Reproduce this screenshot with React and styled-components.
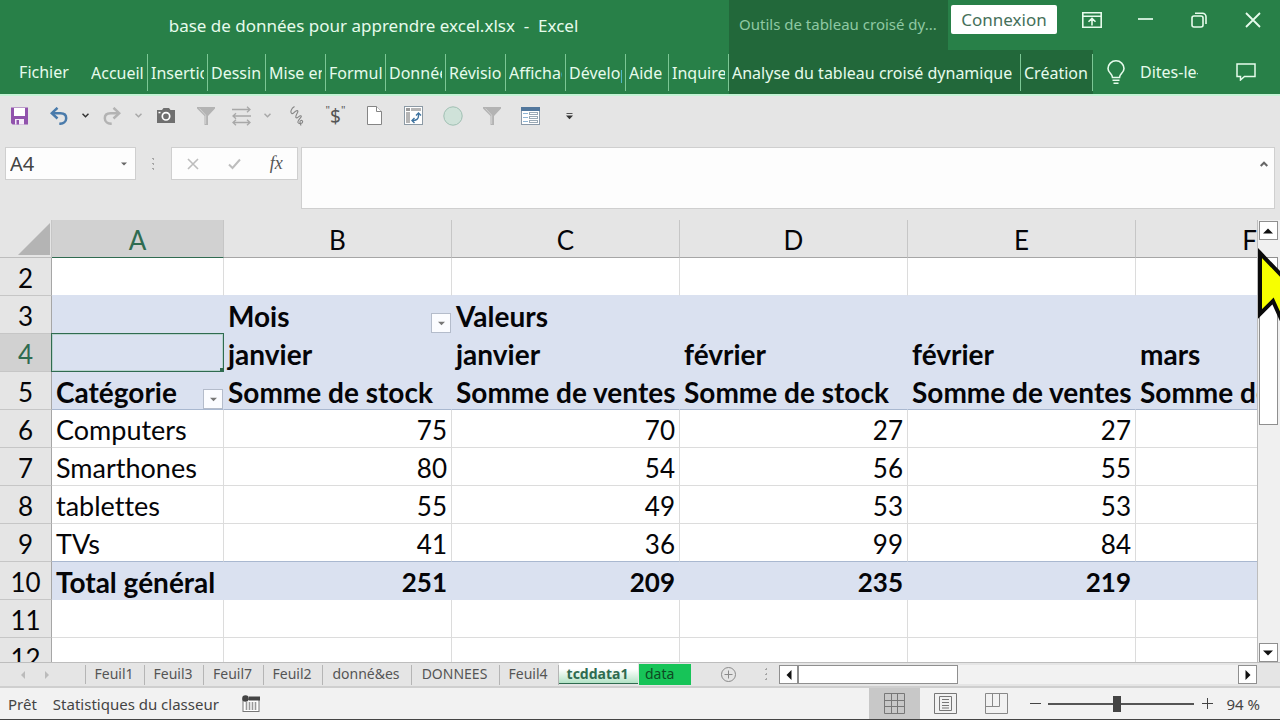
import React, { useState } from 'react'
import styled, { createGlobalStyle, css } from 'styled-components'

const colors = {
  green: '#288048',
  darkGreen: '#22683a',
  mint: '#c4f3d5',
  chrome: '#e5e5e5',
  pivot: '#dae1f0',
  pivotEdge: '#a9b8d0',
  line: '#dcdcdc',
  accent: '#2f6b50'
}

const ribbonTabs = [
  { label: 'Accueil', width: 60 },
  { label: 'Insertion', width: 60 },
  { label: 'Dessin', width: 58 },
  { label: 'Mise en page', width: 60 },
  { label: 'Formules', width: 60 },
  { label: 'Données', width: 60 },
  { label: 'Révision', width: 60 },
  { label: 'Affichage', width: 60 },
  { label: 'Développeur', width: 60 },
  { label: 'Aide', width: 43 },
  { label: 'Inquire', width: 60 }
]

const columns = ['A', 'B', 'C', 'D', 'E', 'F']

const rows = [
  { n: 2, edge: colors.pivot, cells: ['', '', '', '', '', ''] },
  { n: 3, pivot: true, cells: ['', 'Mois', 'Valeurs', '', '', ''], filter: 1 },
  { n: 4, pivot: true, cells: ['', 'janvier', 'janvier', 'février', 'février', 'mars'] },
  {
    n: 5,
    pivot: true,
    edge: colors.pivotEdge,
    filter: 0,
    cells: ['Catégorie', 'Somme de stock', 'Somme de ventes', 'Somme de stock', 'Somme de ventes', 'Somme de stock']
  },
  { n: 6, cells: ['Computers', 75, 70, 27, 27, ''] },
  { n: 7, cells: ['Smarthones', 80, 54, 56, 55, ''] },
  { n: 8, cells: ['tablettes', 55, 49, 53, 53, ''] },
  { n: 9, edge: colors.pivotEdge, cells: ['TVs', 41, 36, 99, 84, ''] },
  { n: 10, pivot: true, cells: ['Total général', 251, 209, 235, 219, ''] },
  { n: 11, cells: ['', '', '', '', '', ''] },
  { n: 12, cells: ['', '', '', '', '', ''] }
]

const sheets = [
  { name: 'Feuil1', width: 59 },
  { name: 'Feuil3', width: 59 },
  { name: 'Feuil7', width: 60 },
  { name: 'Feuil2', width: 59 },
  { name: 'donné&es', width: 89 },
  { name: 'DONNEES', width: 88 },
  { name: 'Feuil4', width: 59 }
]

function Chevron({ color = '#333' }) {
  return (
    <svg width="7" height="5" viewBox="0 0 7 5" fill="none" stroke={color} strokeWidth="1.5">
      <path d="M0.5 0.8L3.5 3.8L6.5 0.8" />
    </svg>
  )
}

function Triangle({ dir = 'down', size = 8, color = '#111' }) {
  const points = {
    down: '0,2 8,2 4,6',
    up: '0,6 8,6 4,2',
    left: '6,0 6,8 2,4',
    right: '2,0 2,8 6,4'
  }
  return (
    <svg width={size} height={size} viewBox="0 0 8 8" fill={color}>
      <polygon points={points[dir]} />
    </svg>
  )
}

function Funnel() {
  return (
    <svg width="18" height="18" viewBox="0 0 18 18" fill="#b3b3b3">
      <path d="M0 0H18V1.5L11 9V18H7.5V9L0 1.5Z" />
      <path d="M2.5 1.5L8.7 8.2V17" stroke="#d0d0d0" fill="none" />
    </svg>
  )
}

const SaveIcon = () => (
  <svg width="17" height="18" viewBox="0 0 17 18">
    <path d="M0 0.5H17V17.5H1.5L0 16Z" fill="#9153ad" />
    <rect x="3" y="1" width="11" height="8" fill="#fff" />
    <rect x="4" y="12" width="9" height="5.5" fill="#f4ecf8" />
    <rect x="5.5" y="13" width="2.5" height="4.5" fill="#9153ad" />
  </svg>
)

const UndoIcon = ({ color, flip }) => (
  <svg width="18" height="18" viewBox="0 0 18 18" fill="none" stroke={color} strokeWidth="2.5">
    <g transform={flip ? 'matrix(-1 0 0 1 18 0)' : undefined}>
      <path d="M7.5 0.8L1.8 6.2L7.5 11.5" />
      <path d="M2 6.2H10.5C14.3 6.2 16.2 8.4 16.2 11.2C16.2 14.6 13.4 16.8 9.3 16.8" />
    </g>
  </svg>
)

const CameraIcon = () => (
  <svg width="20" height="17" viewBox="0 0 20 17">
    <path d="M1 3H6L7.5 1H13L14.5 3H19V16H1Z" fill="#6f6f6f" />
    <circle cx="10" cy="9.3" r="3.7" fill="#6f6f6f" stroke="#fff" strokeWidth="1.7" />
    <rect x="2.5" y="4.8" width="2" height="1.5" fill="#fff" />
  </svg>
)

const ArrowsIcon = () => (
  <svg width="19" height="20" viewBox="0 0 19 20" fill="none" stroke="#a8a8a8" strokeWidth="1.3">
    <path d="M0 3.5H18M15 0.8L18 3.5L15 6.2" />
    <path d="M19 10H1M4 7.3L1 10L4 12.7" />
    <path d="M1 16.5H18M4 13.8L1 16.5L4 19.2M15 13.8L18 16.5L15 19.2" />
  </svg>
)

const SquiggleIcon = () => (
  <svg width="14" height="20" viewBox="0 0 14 20" fill="none" stroke="#858585" strokeWidth="1.1">
    <path d="M4.5 0.5C1 2.5 0 6.5 1.8 7.5C3.8 8.5 5 4.2 7.3 4.6C9.5 5.4 4.6 9.8 6 11.6C7.4 13 9.4 8.8 11 9.8C12.6 11.2 6.8 14 8 16.5C9.2 18.4 13 17.6 12.6 15.4C12 13.6 9.6 14.4 10 16.5L11 19.5" />
  </svg>
)

const PageIcon = () => (
  <svg width="15" height="19" viewBox="0 0 15 19" fill="#fff" stroke="#858585">
    <path d="M0.5 0.5H9.5L14.5 5.5V18.5H0.5Z" />
    <path d="M9.5 0.5V5.5H14.5" />
  </svg>
)

const PivotIcon = () => (
  <svg width="19" height="19" viewBox="0 0 19 19">
    <rect x="0.5" y="0.5" width="18" height="18" fill="#fff" stroke="#8c9aa5" />
    <rect x="2" y="2" width="4" height="3" fill="#9b9b9b" />
    <rect x="7" y="2" width="10" height="3" fill="#b5b5b5" />
    <rect x="2" y="6" width="4" height="11" fill="#b5b5b5" />
    <g fill="none" stroke="#3d729f" strokeWidth="1.4">
      <path d="M14.5 7.5V10C14.5 13 12.5 14.5 8.5 14.5" />
      <path d="M12 9.5L14.5 7L17 9.5M10.5 12L8 14.5L10.5 17" />
    </g>
  </svg>
)

const FormIcon = () => (
  <svg width="19" height="18" viewBox="0 0 19 18">
    <rect x="0.5" y="0.5" width="18" height="17" fill="#fff" stroke="#8a99a8" />
    <rect width="19" height="4" fill="#52779c" />
    <path d="M2 6.5H7M2 10.5H7M2 14.5H7" stroke="#90b5d5" />
    <g fill="none" stroke="#9aa9b5">
      <rect x="8.5" y="5.5" width="8" height="2" />
      <rect x="8.5" y="9.5" width="8" height="2" />
      <rect x="8.5" y="13.5" width="8" height="2" />
    </g>
  </svg>
)

function TitleBar() {
  return (
    <TitleRow>
      <Title>base de données pour apprendre excel.xlsx&nbsp; -&nbsp; Excel</Title>
      <ContextTitle>Outils de tableau croisé dy...</ContextTitle>
      <SignIn>Connexion</SignIn>
      <WindowButtons>
        <WindowButton aria-label="Options du ruban">
          <svg width="20" height="16" viewBox="0 0 20 16" fill="none" stroke="currentColor" strokeWidth="1.6">
            <path d="M0.8 0.8H19.2V15.2H0.8ZM1 4.3H19M10 13.5V6.5M6.5 9.8L10 6.4L13.5 9.8" />
          </svg>
        </WindowButton>
        <WindowButton aria-label="Réduire">
          <svg width="15" height="16" viewBox="0 0 15 16" stroke="currentColor" strokeWidth="1.7">
            <path d="M0 7H15" />
          </svg>
        </WindowButton>
        <WindowButton aria-label="Restaurer">
          <svg width="16" height="16" viewBox="0 0 16 16" fill="none" stroke="currentColor" strokeWidth="1.6">
            <rect x="1" y="4" width="11" height="11" rx="2" />
            <path d="M4 1.2H11.5A3.5 3.5 0 0 1 15 4.7V12" />
          </svg>
        </WindowButton>
        <WindowButton aria-label="Fermer">
          <svg width="16" height="16" viewBox="0 0 16 16" stroke="currentColor" strokeWidth="1.8">
            <path d="M1 1L15 15M15 1L1 15" />
          </svg>
        </WindowButton>
      </WindowButtons>
    </TitleRow>
  )
}

function Ribbon() {
  return (
    <RibbonRow>
      <FileTab>Fichier</FileTab>
      {ribbonTabs.map(tab => (
        <RibbonTab key={tab.label} $width={tab.width}>
          <span>{tab.label}</span>
        </RibbonTab>
      ))}
      <ContextTabs>
        <RibbonTab $width={292}><span>Analyse du tableau croisé dynamique</span></RibbonTab>
        <RibbonTab $width={72}><span>Création</span></RibbonTab>
      </ContextTabs>
      <TellMe>
        <svg width="18" height="24" viewBox="0 0 18 24" fill="none" stroke="currentColor" strokeWidth="1.6">
          <path d="M5.5 17.5C5.5 13.5 1 13 1 8.5A8 7.7 0 0 1 17 8.5C17 13 12.5 13.5 12.5 17.5ZM5.5 20.3H12.5M6.5 23.2H11.5" />
        </svg>
        <span>Dites-le-nous</span>
      </TellMe>
      <CommentButton aria-label="Commentaires">
        <svg width="20" height="18" viewBox="0 0 20 18" fill="none" stroke="currentColor" strokeWidth="1.5">
          <path d="M1 1H19V13.5H8.5L4.5 17V13.5H1Z" />
        </svg>
      </CommentButton>
    </RibbonRow>
  )
}

function QuickAccess() {
  return (
    <QuickBar>
      <Tool aria-label="Enregistrer"><SaveIcon /></Tool>
      <Tool aria-label="Annuler"><UndoIcon color="#4a7bab" /></Tool>
      <Tool $width={14} aria-label="Liste annuler"><Chevron /></Tool>
      <Tool aria-label="Rétablir"><UndoIcon color="#b3b3b3" flip /></Tool>
      <Tool $width={14} aria-label="Liste rétablir"><Chevron color="#a8a8a8" /></Tool>
      <Tool $width={41} aria-label="Appareil photo"><CameraIcon /></Tool>
      <Tool aria-label="Filtrer"><Funnel /></Tool>
      <Tool $width={32} aria-label="Flèches"><ArrowsIcon /></Tool>
      <Tool $width={20} aria-label="Liste flèches"><Chevron color="#a8a8a8" /></Tool>
      <Tool aria-label="Dessin libre"><SquiggleIcon /></Tool>
      <Tool aria-label="Format monétaire"><sup>"</sup>$<sup>"</sup></Tool>
      <Tool aria-label="Nouveau"><PageIcon /></Tool>
      <Tool aria-label="Tableau croisé dynamique"><PivotIcon /></Tool>
      <Tool aria-label="Ellipse">
        <svg width="20" height="20" viewBox="0 0 20 20">
          <circle cx="10" cy="10" r="9.2" fill="#cfe2d9" stroke="#9fbfb2" />
        </svg>
      </Tool>
      <Tool aria-label="Filtre automatique"><Funnel /></Tool>
      <Tool aria-label="Formulaire"><FormIcon /></Tool>
      <Tool aria-label="Personnaliser">
        <svg width="7" height="8" viewBox="0 0 7 8">
          <path d="M0.5 1.5H6.5" stroke="#555" />
          <polygon points="0,3.5 7,3.5 3.5,7.2" fill="#333" />
        </svg>
      </Tool>
    </QuickBar>
  )
}

function FormulaBar() {
  return (
    <FormulaRow>
      <NameBox>
        <input aria-label="Zone Nom" defaultValue="A4" />
        <button aria-label="Liste des noms"><Triangle size={6} color="#666" /></button>
      </NameBox>
      <Dots $width={35} />
      <FormulaButtons>
        <button aria-label="Annuler la saisie">
          <svg width="12" height="12" viewBox="0 0 12 12" stroke="#bdbdbd" strokeWidth="1.6">
            <path d="M1 1L11 11M11 1L1 11" />
          </svg>
        </button>
        <button aria-label="Valider">
          <svg width="13" height="12" viewBox="0 0 13 12" fill="none" stroke="#bdbdbd" strokeWidth="2">
            <path d="M1 6.5L4.5 10L12 1.5" />
          </svg>
        </button>
        <button>fx</button>
      </FormulaButtons>
      <FormulaField>
        <textarea aria-label="Barre de formule" />
        <button aria-label="Réduire la barre">
          <svg width="8" height="6" viewBox="0 0 8 6" fill="none" stroke="#666" strokeWidth="2">
            <path d="M0.7 5L4 1.7L7.3 5" />
          </svg>
        </button>
      </FormulaField>
    </FormulaRow>
  )
}

function Grid() {
  // active cell is [row number, column index]
  const [active, setActive] = useState([4, 0])

  return (
    <GridPane>
      <Table>
        <colgroup>
          <col style={{ width: 52 }} />
          {columns.map((c, i) => <col key={c} style={{ width: i === 0 ? 172 : 228 }} />)}
        </colgroup>
        <thead>
          <tr>
            <Corner aria-label="Tout sélectionner">
              <svg width="32" height="32" viewBox="0 0 32 32"><polygon points="32,0 32,32 0,32" fill="#b4b4b4" /></svg>
            </Corner>
            {columns.map((c, i) => <ColHead key={c} $active={active[1] === i}>{c}</ColHead>)}
          </tr>
        </thead>
        <tbody>
          {rows.map(row => (
            <tr key={row.n}>
              <RowHead $active={active[0] === row.n}>{row.n}</RowHead>
              {row.cells.map((value, i) => (
                <Cell
                  key={i}
                  $pivot={row.pivot}
                  $edge={row.edge}
                  $number={typeof value === 'number'}
                  onClick={() => setActive([row.n, i])}
                >
                  {value}
                  {row.filter === i && (
                    <FilterButton aria-label="Filtre"><Triangle size={7} color="#777" /></FilterButton>
                  )}
                  {active[0] === row.n && active[1] === i && <Selection />}
                </Cell>
              ))}
            </tr>
          ))}
        </tbody>
      </Table>
    </GridPane>
  )
}

function SheetBar() {
  return (
    <SheetRow>
      <SheetNav>
        <button aria-label="Feuille précédente"><Triangle dir="left" color="#bbb" /></button>
        <button aria-label="Feuille suivante"><Triangle dir="right" color="#bbb" /></button>
      </SheetNav>
      {sheets.map(sheet => <SheetTab key={sheet.name} $width={sheet.width}>{sheet.name}</SheetTab>)}
      <ActiveSheet>tcddata1</ActiveSheet>
      <DataSheet>data</DataSheet>
      <AddSheet aria-label="Nouvelle feuille">
        <svg width="15" height="15" viewBox="0 0 15 15" fill="none" stroke="#8a8a8a">
          <circle cx="7.5" cy="7.5" r="7" />
          <path d="M7.5 3.5V11.5M3.5 7.5H11.5" />
        </svg>
      </AddSheet>
      <Dots $width={25} />
      <HScroll>
        <ScrollButton aria-label="Défiler à gauche"><Triangle dir="left" size={10} /></ScrollButton>
        <HThumb />
        <ScrollButton aria-label="Défiler à droite"><Triangle dir="right" size={10} /></ScrollButton>
      </HScroll>
    </SheetRow>
  )
}

function StatusBar() {
  const [zoom, setZoom] = useState(94)

  return (
    <StatusRow>
      <span>Prêt</span>
      <span>Statistiques du classeur</span>
      <MacroButton aria-label="Enregistrer une macro">
        <svg width="18" height="18" viewBox="0 0 18 18">
          <rect x="1" y="4.5" width="16" height="12" fill="#fff" stroke="#777" />
          <rect x="7" y="1.5" width="11" height="4" fill="#444" />
          <path d="M4.5 7V15M7.5 7V15M10.5 7V15M13.5 7V15" stroke="#999" strokeWidth="1.6" />
          <circle cx="3.5" cy="3.5" r="3.3" fill="#444" />
        </svg>
      </MacroButton>
      <Spacer />
      <ViewButton $active aria-label="Normal">
        <svg width="21" height="21" viewBox="0 0 21 21" fill="none" stroke="#777">
          <path d="M0.5 0.5H20.5V20.5H0.5ZM7.5 0V21M13.5 0V21M0 7.5H21M0 13.5H21" />
        </svg>
      </ViewButton>
      <ViewButton aria-label="Mise en page">
        <svg width="23" height="21" viewBox="0 0 23 21" fill="none" stroke="#777">
          <path d="M0.5 0.5H22.5V20.5H0.5ZM5.5 3.5H17.5V17.5H5.5ZM8 6.5H15M8 9.5H15M8 12.5H15M8 15H15" />
        </svg>
      </ViewButton>
      <ViewButton aria-label="Avec sauts de page">
        <svg width="23" height="21" viewBox="0 0 23 21" fill="none" stroke="#888">
          <path d="M0.5 0.5H22.5V20.5H0.5ZM0.5 13.5H14.5V0.5M7.5 0.5V13.5" />
        </svg>
      </ViewButton>
      <ZoomButton aria-label="Zoom arrière" onClick={() => setZoom(zoom - 10)}>
        <svg width="11" height="11" viewBox="0 0 11 11" stroke="#444"><path d="M0 5.5H11" /></svg>
      </ZoomButton>
      <ZoomSlider aria-label="Zoom" min="0" max="200" value={zoom} onChange={e => setZoom(Number(e.target.value))} />
      <ZoomButton aria-label="Zoom avant" onClick={() => setZoom(zoom + 10)}>
        <svg width="11" height="11" viewBox="0 0 11 11" stroke="#444"><path d="M0 5.5H11M5.5 0V11" /></svg>
      </ZoomButton>
      <ZoomValue>{zoom} %</ZoomValue>
    </StatusRow>
  )
}

function App() {
  return (
    <Window>
      <GlobalStyle />
      <Header>
        <TitleBar />
        <Ribbon />
      </Header>
      <QuickAccess />
      <FormulaBar />
      <Workspace>
        <Grid />
        <VScroll>
          <ScrollButton aria-label="Défiler vers le haut"><Triangle dir="up" size={10} /></ScrollButton>
          <VThumb />
          <ScrollButton aria-label="Défiler vers le bas"><Triangle size={10} /></ScrollButton>
          <Pointer width="50" height="100" viewBox="0 0 50 100">
            <path d="M2 6L46 52L26 54L38 84L30 87L15 54L2 67Z" fill="#f7ff00" stroke="#0a0a0a" strokeWidth="4" />
          </Pointer>
        </VScroll>
      </Workspace>
      <SheetBar />
      <StatusBar />
    </Window>
  )
}

const GlobalStyle = createGlobalStyle`
  * { box-sizing: border-box; }
  body {
    margin: 0;
    font-family: 'Noto Sans', 'Open Sans', sans-serif;
  }
  button {
    display: flex;
    align-items: center;
    justify-content: center;
    padding: 0;
    border: 0;
    background: none;
    color: inherit;
    font: inherit;
  }
  svg { display: block; flex: none; }
`

const Window = styled.div`
  display: flex;
  flex-direction: column;
  height: 100vh;
  overflow: hidden;
  background: ${colors.chrome};
  border-bottom: 1px solid #444;
`

const Header = styled.header`
  flex: none;
  background: ${colors.green};
  border-bottom: 2px solid ${colors.mint};
  color: #e6fbec;
`

const TitleRow = styled.div`
  display: flex;
  height: 50px;
`

const Title = styled.div`
  flex: 1;
  padding: 0 0 0 18px;
  font-size: 17px;
  line-height: 52px;
  text-align: center;
  white-space: nowrap;
`

const ContextTitle = styled.div`
  width: 219px;
  padding-left: 10px;
  background: ${colors.darkGreen};
  color: #8fc9a3;
  font-size: 15px;
  line-height: 48px;
  white-space: nowrap;
`

const SignIn = styled.button`
  && {
    width: 106px;
    height: 29px;
    margin: 5px 8px 0 3px;
    border-radius: 2px;
    background: #fff;
    color: #45705a;
    font-size: 17px;
  }
`

const WindowButtons = styled.div`
  display: flex;
  width: 215px;
  height: 39px;
`

const WindowButton = styled.button`
  flex: 1;
`

const RibbonRow = styled.nav`
  display: flex;
  height: 44px;
  font-size: 16px;
`

const FileTab = styled.button`
  width: 88px;
`

const RibbonTab = styled.button`
  && {
    flex: none;
    justify-content: flex-start;
    width: ${props => props.$width}px;
    height: 37px;
    margin-top: 4px;
    padding: 0 3px;
    border-right: 1px solid #7cc795;
    white-space: nowrap;
  }
  span {
    overflow: hidden;
  }
`

const ContextTabs = styled.div`
  display: flex;
  background: ${colors.darkGreen};
`

const TellMe = styled.button`
  && {
    flex: none;
    gap: 15px;
    justify-content: flex-start;
    width: 105px;
    padding-left: 14px;
    white-space: nowrap;
  }
  span {
    overflow: hidden;
  }
`

const CommentButton = styled.button`
  && {
    margin: 0 24px 0 auto;
  }
`

const QuickBar = styled.div`
  display: flex;
  flex: none;
  height: 39px;
`

const Tool = styled.button`
  && {
    width: ${props => props.$width || 39}px;
    color: #555;
    font-size: 19px;
  }
  sup {
    align-self: flex-start;
    padding-top: 8px;
    font-size: 11px;
    line-height: 12px;
  }
`

const FormulaRow = styled.div`
  display: flex;
  flex: none;
  align-items: flex-start;
  padding: 12px 5px 0;
  height: 85px;
`

const fieldBox = css`
  display: flex;
  border: 1px solid #cfcfcf;
  background: #fdfdfd;
`

const NameBox = styled.div`
  ${fieldBox}
  width: 131px;
  height: 33px;
  input {
    flex: 1;
    min-width: 0;
    padding: 0 4px;
    border: 0;
    background: none;
    color: #444;
    font: 20px 'Noto Sans', sans-serif;
  }
  button {
    width: 22px;
  }
`

const Dots = styled.div`
  width: ${props => props.$width}px;
  height: 33px;
  background: radial-gradient(circle, #a5a5a5 1px, transparent 1px) center 9px / 100% 5px repeat-y;
  background-clip: content-box;
  padding: 10px 0 8px;
`

const FormulaButtons = styled.div`
  ${fieldBox}
  width: 127px;
  height: 33px;
  margin-right: 3px;
  button {
    flex: 1;
  }
  button:last-child {
    color: #555;
    font: italic 18px 'Liberation Serif', serif;
  }
`

const FormulaField = styled.div`
  ${fieldBox}
  flex: 1;
  height: 62px;
  textarea {
    flex: 1;
    border: 0;
    background: none;
    resize: none;
  }
  button {
    width: 20px;
    height: 32px;
  }
`

const Workspace = styled.main`
  display: flex;
  flex: 1;
  min-height: 0;
`

const GridPane = styled.div`
  flex: 1;
  min-width: 0;
  overflow: hidden;
  background: #fff;
`

const Table = styled.table`
  width: 1364px;
  table-layout: fixed;
  border-spacing: 0;
  font-family: Lato, sans-serif;
  font-size: 26px;
  font-variant-ligatures: none;
  line-height: 34px;
  color: #050508;
  tr {
    height: 38px;
  }
`

const Corner = styled.th`
  padding: 0 2px 2px 18px;
  background: ${colors.chrome};
  border-right: 1px solid #c6c6c6;
  border-bottom: 1px solid #bdbdbd;
  vertical-align: bottom;
`

const ColHead = styled.th`
  padding: 3px 0 0;
  background: ${props => (props.$active ? '#d1d1d1' : colors.chrome)};
  border-right: 1px solid #c6c6c6;
  border-bottom: 1px solid ${props => (props.$active ? colors.accent : '#a6a6a6')};
  color: ${props => (props.$active ? colors.accent : 'inherit')};
  font-weight: 400;
`

const RowHead = styled.th`
  padding: 3px 0 0;
  background: ${props => (props.$active ? '#d1d1d1' : colors.chrome)};
  border-right: 1px solid #a6a6a6;
  border-bottom: 1px solid #c6c6c6;
  color: ${props => (props.$active ? colors.accent : 'inherit')};
  font-weight: 400;
`

const Cell = styled.td`
  position: relative;
  padding: 3px 4px 0;
  border-right: 1px solid ${colors.line};
  border-bottom: 1px solid ${colors.line};
  font-size: ${props => (props.$number ? 26 : 27)}px;
  text-align: ${props => (props.$number ? 'right' : 'left')};
  white-space: nowrap;
  ${props => props.$pivot && css`
    background: ${colors.pivot};
    border-color: ${colors.pivot};
    font-size: ${props.$number ? 26 : 28}px;
    font-weight: 700;
  `}
  ${props => props.$edge && css`
    border-bottom-color: ${props.$edge};
  `}
`

const FilterButton = styled.button`
  && {
    position: absolute;
    right: 0;
    bottom: 0;
    width: 20px;
    height: 20px;
    border: 1px solid #b4bccb;
    background: #fbfcff;
  }
`

const Selection = styled.div`
  position: absolute;
  inset: -1px;
  border: 1px solid ${colors.accent};
  box-shadow: inset 0 0 0 1px #b9d3cf;
  &::after {
    content: '';
    position: absolute;
    right: -2px;
    bottom: -2px;
    width: 5px;
    height: 5px;
    background: ${colors.accent};
  }
`

const ScrollButton = styled.button`
  && {
    flex: none;
    width: 19px;
    height: 19px;
    border: 1px solid #8f8f8f;
    background: #fff;
  }
`

const VScroll = styled.div`
  position: relative;
  display: flex;
  flex: none;
  flex-direction: column;
  align-items: center;
  justify-content: space-between;
  width: 23px;
  padding: 1px 2px 0 0;
  border-left: 1px solid #bdbdbd;
  background: #f0f0f0;
`

const VThumb = styled.div`
  width: 19px;
  height: 168px;
  margin: 17px 0 auto;
  border: 1px solid #8f8f8f;
  background: #fff;
`

const Pointer = styled.svg`
  position: absolute;
  top: 27px;
  left: 0;
`

const SheetRow = styled.div`
  display: flex;
  flex: none;
  align-items: center;
  height: 26px;
  border-top: 1px solid #bdbdbd;
  border-bottom: 2px solid #cfcfcf;
  color: #555;
  font-size: 14px;
`

const SheetNav = styled.div`
  display: flex;
  gap: 16px;
  width: 86px;
  height: 19px;
  padding-left: 19px;
  border-right: 1px solid #b5b5b5;
`

const SheetTab = styled.button`
  && {
    width: ${props => props.$width}px;
    height: 20px;
    padding: 0 2px 2px 0;
    border-right: 1px solid #b5b5b5;
  }
`

const ActiveSheet = styled.button`
  && {
    align-self: stretch;
    width: 79px;
    margin-bottom: 2px;
    padding-right: 2px;
    border-bottom: 1px solid ${colors.accent};
    background: linear-gradient(#fff 30%, #b3e3c6);
    color: ${colors.accent};
    font-weight: 700;
  }
`

const DataSheet = styled.button`
  && {
    justify-content: flex-start;
    width: 52px;
    height: 21px;
    margin: 0 30px 0 1px;
    padding: 0 6px 2px;
    background: #17c458;
    color: #0e4a22;
  }
`

const AddSheet = styled.button`
  && {
    margin-right: 18px;
  }
`

const HScroll = styled.div`
  display: flex;
  flex: 1;
  margin-right: 23px;
  background: #f2f2f2;
`

const HThumb = styled.div`
  width: 160px;
  height: 19px;
  margin-right: auto;
  border: 1px solid #8f8f8f;
  background: #fff;
`

const StatusRow = styled.footer`
  display: flex;
  flex: none;
  align-items: center;
  height: 31px;
  padding: 0 20px 0 8px;
  background: #f2f2f2;
  color: #444;
  font-size: 15px;
  > span + span {
    margin-left: 16px;
  }
`

const MacroButton = styled.button`
  && {
    margin-left: 23px;
  }
`

const Spacer = styled.div`
  flex: 1;
`

const ViewButton = styled.button`
  && {
    width: 51px;
    height: 31px;
    background: ${props => (props.$active ? '#c8c8c8' : 'none')};
  }
`

const ZoomButton = styled.button`
  && {
    width: 26px;
    height: 20px;
  }
`

const ZoomSlider = styled.input.attrs({ type: 'range' })`
  width: 146px;
  height: 16px;
  margin: 0;
  appearance: none;
  background: linear-gradient(#555, #555) center / 100% 2px no-repeat;
  &::-webkit-slider-thumb {
    appearance: none;
    width: 8px;
    height: 16px;
    background: #444;
  }
`

const ZoomValue = styled.div`
  width: 40px;
  text-align: right;
  white-space: nowrap;
`

export default App
